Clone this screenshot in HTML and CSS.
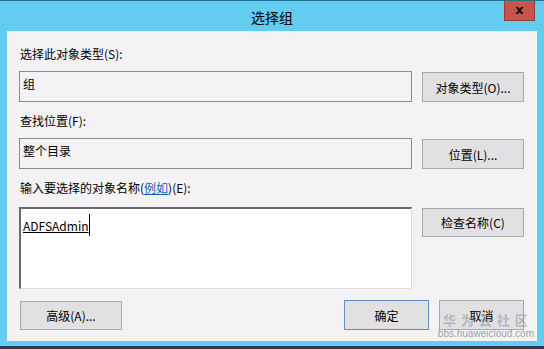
FILE: index.html
```html
<!DOCTYPE html>
<html lang="zh-CN">
<head>
    <meta charset="UTF-8">
    <title>选择组</title>
    <link rel="stylesheet" href="styles.css">
</head>
<body>
    <div class="window">
        <div class="titlebar">
            <span class="title">选择组</span>
            <span class="close">x</span>
        </div>

        <div class="client">
            <div class="label">选择此对象类型(<u>S</u>):</div>
            <div class="row">
                <div class="field">组</div>
                <button class="btn">对象类型(<u>O</u>)...</button>
            </div>

            <div class="label">查找位置(<u>F</u>):</div>
            <div class="row">
                <div class="field">整个目录</div>
                <button class="btn">位置(<u>L</u>)...</button>
            </div>

            <div class="label label-names">输入要选择的对象名称(<a class="link">例如</a>)(<u>E</u>):</div>
            <div class="row">
                <div class="names"><span class="name">ADFSAdmin</span><span class="caret"></span></div>
                <button class="btn btn-short">检查名称(<u>C</u>)</button>
            </div>

            <div class="footer">
                <button class="btn btn-short">高级(<u>A</u>)...</button>
                <div class="footer-right">
                    <button class="btn btn-short btn-ok">确定</button>
                    <button class="btn btn-short btn-cancel">取消</button>
                </div>
            </div>

            <!-- watermark over the corner -->
            <div class="watermark">
                <div class="wm-big">华 为 云 社 区</div>
                <div class="wm-small">bbs.huaweicloud.com</div>
            </div>
        </div>
    </div>
</body>
</html>
```

FILE: styles.css
```css
* {
    margin: 0;
    padding: 0;
    box-sizing: border-box;
    font-family: "Noto Sans CJK SC", "Liberation Sans", sans-serif;
}

body {
    background: #5fcbee;
    width: 544px;
    height: 349px;
    overflow: hidden;
}

.window {
    width: 544px;
    height: 349px;
    background: #62cdf0;
    border-top: 1px solid #2a6f8a;
    border-bottom: 3px solid #2b3d4c;
    display: flex;
    flex-direction: column;
}

.titlebar {
    height: 30px;
    position: relative;
    display: flex;
    justify-content: center;
    align-items: center;
}

.title {
    font-size: 14px;
    color: #000;
    margin-top: 1px;
}

.close {
    position: absolute;
    top: 0;
    right: 9px;
    width: 31px;
    height: 20px;
    background: #c9544c;
    border: 1px solid #9a3a35;
    border-top: none;
    color: #111;
    font-family: "DejaVu Sans", sans-serif;
    font-weight: bold;
    font-size: 13px;
    line-height: 17px;
    text-align: center;
}

.client {
    position: relative;
    flex: 1;
    margin: 0 7px 5px 7px;
    background: #f5f2f6;
    padding: 15px 13px 0 12px;
}

.label {
    font-size: 12px;
    line-height: 16px;
    color: #000;
    padding-left: 1px;
    margin-bottom: 9px;
}

.label-names {
    margin-bottom: 11px;
}

.label u,
.btn u {
    text-decoration: none;
}

.link {
    color: #0d5fbd;
    text-decoration: underline;
}

.row {
    display: flex;
    gap: 10px;
    align-items: flex-start;
    margin-bottom: 11px;
}

.field {
    width: 393px;
    height: 31px;
    border: 1px solid #8e8c90;
    background: #f5f2f6;
    font-size: 12px;
    line-height: 16px;
    padding: 4px 3px;
}

.names {
    width: 393px;
    height: 82px;
    background: #fff;
    border-top: 2px solid #6c6a6e;
    border-left: 2px solid #6c6a6e;
    border-right: 1px solid #dcdcdc;
    border-bottom: 1px solid #dcdcdc;
    padding: 8px 2px;
    display: flex;
    align-items: flex-start;
}

.name {
    font-size: 12px;
    line-height: 18px;
    text-decoration: underline;
    color: #000;
}

.caret {
    width: 1px;
    height: 22px;
    background: #000;
    margin-top: -3px;
}

.btn {
    width: 102px;
    height: 30px;
    margin-top: 1px;
    background: #e1e0e2;
    border: 1px solid #a9a8aa;
    font-size: 12px;
    color: #000;
}

.btn-short {
    height: 29px;
}

.footer {
    display: flex;
    justify-content: space-between;
    align-items: flex-start;
    padding-left: 1px;
    margin-top: 1px;
}

.footer-right {
    display: flex;
    gap: 10px;
}

.btn-ok,
.btn-cancel {
    width: 85px;
    height: 30px;
    margin-top: 0;
}

.btn-ok {
    border-color: #5b8fcd;
}

.watermark {
    position: absolute;
    right: 3px;
    bottom: 1px;
    text-align: center;
    pointer-events: none;
}

.wm-big {
    font-size: 13px;
    line-height: 16px;
    font-weight: bold;
    letter-spacing: 1px;
    color: rgba(130, 140, 150, 0.5);
}

.wm-small {
    font-size: 10px;
    line-height: 12px;
    font-family: "Liberation Sans", sans-serif;
    color: rgba(110, 120, 130, 0.7);
}
```
